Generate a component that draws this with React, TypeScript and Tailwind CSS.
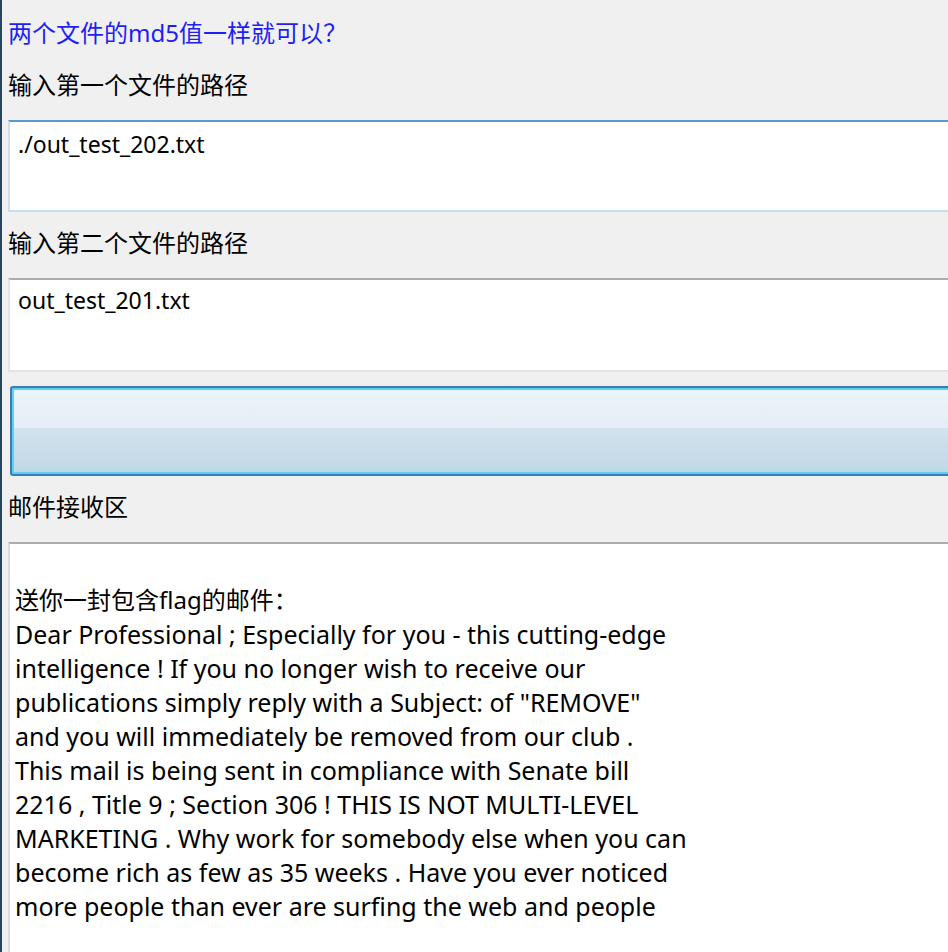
import React from "react";

const mailLines = [
  "Dear Professional ; Especially for you - this cutting-edge",
  "intelligence ! If you no longer wish to receive our",
  'publications simply reply with a Subject: of "REMOVE"',
  "and you will immediately be removed from our club .",
  "This mail is being sent in compliance with Senate bill",
  "2216 , Title 9 ; Section 306 ! THIS IS NOT MULTI-LEVEL",
  "MARKETING . Why work for somebody else when you can",
  "become rich as few as 35 weeks . Have you ever noticed",
  "more people than ever are surfing the web and people",
];

const font = {
  fontFamily: '"Noto Sans", "Noto Sans CJK SC", sans-serif',
};

function Label({ children }: { children: React.ReactNode }) {
  return <div className="h-[34px] leading-[34px] text-[24px] text-black whitespace-nowrap">{children}</div>;
}

export default function App() {
  return (
    <div
      className="flex h-[952px] w-[948px] overflow-hidden bg-[#f0f0f0]"
      style={font}
    >
      {/* window frame edge */}
      <div className="w-[2px] shrink-0 bg-[#27485e]" />

      <div className="flex flex-1 flex-col pl-[6px] pt-[16px]">
        <div className="h-[34px] leading-[34px] text-[24px] text-[#1f1ff5] whitespace-nowrap">
          两个文件的md5值一样就可以？
        </div>

        <div className="mt-[18px]">
          <Label>输入第一个文件的路径</Label>
        </div>

        {/* first path box (focused) */}
        <div className="mt-[18px] h-[92px] border-t-2 border-l-2 border-b-2 border-t-[#5a9bc8] border-l-[#c8e0f0] border-b-[#c5dff0] bg-white pl-[8px] pt-[5px]">
          <div className="h-[34px] leading-[34px] text-[23px] text-black">./out_test_202.txt</div>
        </div>

        <div className="mt-[14px]">
          <Label>输入第二个文件的路径</Label>
        </div>

        {/* second path box */}
        <div className="mt-[18px] h-[94px] border-t-2 border-l-2 border-b-2 border-t-[#acacac] border-l-[#e3e3e3] border-b-[#e3e3e3] bg-white pl-[8px] pt-[3px]">
          <div className="h-[34px] leading-[34px] text-[23px] text-black">out_test_201.txt</div>
        </div>

        {/* button */}
        <div className="ml-[2px] mt-[14px] h-[90px] rounded-l-[3px] border-2 border-r-0 border-[#3a7db0] p-[2px] pr-0 bg-[#5dd0f2]">
          <div className="h-full w-full bg-[linear-gradient(to_bottom,#ebf4f8_0%,#e5eef6_46%,#d1e3ee_47%,#c0d8e5_100%)]" />
        </div>

        <div className="mt-[14px]">
          <Label>邮件接收区</Label>
        </div>

        {/* mail area */}
        <div className="mt-[18px] flex-1 border-t-2 border-l-2 border-t-[#acacac] border-l-[#dcdde3] bg-white pl-[5px] pt-[5px]">
          <div className="h-[34px]" />
          <div className="h-[34px] leading-[34px] text-[24px] text-black whitespace-nowrap">
            送你一封包含flag的邮件：
          </div>
          {mailLines.map((line, i) => (
            <div key={i} className="h-[34px] leading-[34px] text-[25px] text-black whitespace-nowrap">
              {line}
            </div>
          ))}
        </div>
      </div>
    </div>
  );
}
